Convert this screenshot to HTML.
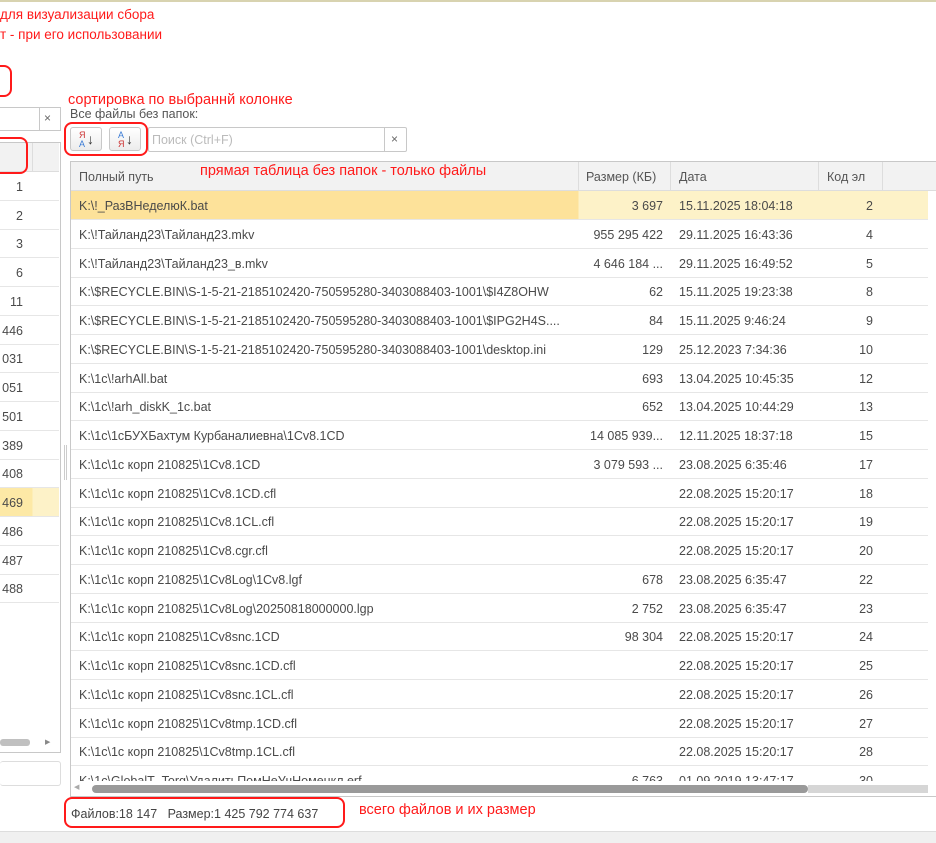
<!DOCTYPE html>
<html><head><meta charset="utf-8"><style>
*{box-sizing:border-box;margin:0;padding:0}
body{width:936px;height:843px;overflow:hidden;background:#fff;font-family:"Liberation Sans",Arial,sans-serif;font-size:12.5px;color:#4a4a4a;position:relative}
.a{position:absolute}
.red{color:#ff1a1a;font-size:14.5px;white-space:nowrap}
.rbox{position:absolute;border:2px solid #ff1a1a;border-radius:8px}
.row{position:absolute;left:71px;width:857px;height:29px;border-bottom:1px solid #e6e6e6;white-space:nowrap}
.row span{position:absolute;top:8px}
.c1{left:8px}
.c2{right:265px;text-align:right}
.c3{left:608px}
.c4{right:55px}
.lrow{position:absolute;left:0;width:59px;height:29px;border-bottom:1px solid #e6e6e6}
.lrow span{position:absolute;right:36px;top:8px}
.btn{position:absolute;width:32px;height:24px;border:1px solid #c8c8c8;border-radius:3px;background:linear-gradient(#fff,#ececec);font-size:9px;line-height:9px}
</style></head><body>
<div class="a" style="left:0;top:0;width:936px;height:2px;background:#d8d3b0"></div>
<div class="a red" style="left:0;top:7px;font-size:13.5px">для визуализации сбора</div>
<div class="a red" style="left:0;top:27px;font-size:13.5px">т - при его использовании</div>
<div class="rbox" style="left:-10px;top:65px;width:22px;height:32px"></div>

<!-- left panel -->
<div class="a" style="left:0;top:107px;width:61px;height:24px;border:1px solid #c8c8c8;border-left:none"></div>
<div class="a" style="left:39px;top:108px;width:1px;height:22px;background:#c8c8c8"></div>
<div class="a" style="left:44px;top:111px;font-size:12px;color:#666">×</div>
<div class="a" style="left:0;top:142px;width:61px;height:611px;border:1px solid #c8c8c8;border-left:none"></div>
<div class="a" style="left:0;top:143px;width:59px;height:29px;background:#f2f2f2;border-bottom:1px solid #ddd"></div>
<div class="a" style="left:32px;top:143px;width:1px;height:29px;background:#ddd"></div>
<div class="rbox" style="left:-10px;top:137px;width:38px;height:37px"></div>
<div class="lrow" style="top:172px"><span>1</span></div>
<div class="lrow" style="top:201px"><span>2</span></div>
<div class="lrow" style="top:229px"><span>3</span></div>
<div class="lrow" style="top:258px"><span>6</span></div>
<div class="lrow" style="top:287px"><span>11</span></div>
<div class="lrow" style="top:316px"><span>446</span></div>
<div class="lrow" style="top:344px"><span>031</span></div>
<div class="lrow" style="top:373px"><span>051</span></div>
<div class="lrow" style="top:402px"><span>501</span></div>
<div class="lrow" style="top:431px"><span>389</span></div>
<div class="lrow" style="top:459px"><span>408</span></div>
<div class="lrow" style="top:488px;background:linear-gradient(90deg,#fde9a6 0,#fde9a6 32px,#fdf2c8 33px)"><span>469</span></div>
<div class="lrow" style="top:517px"><span>486</span></div>
<div class="lrow" style="top:546px"><span>487</span></div>
<div class="lrow" style="top:574px"><span>488</span></div>
<div class="a" style="left:0;top:739px;width:30px;height:7px;background:#c0c0c0;border-radius:3px"></div>
<div class="a" style="left:45px;top:738px;font-size:7px;color:#888">▶</div>
<div class="a" style="left:0;top:761px;width:61px;height:25px;border:1px solid #ddd;border-left:none;border-radius:3px"></div>
<div class="a" style="left:64px;top:445px;width:3px;height:35px;border-left:1px solid #ccc;border-right:1px solid #ccc"></div>

<!-- main -->
<div class="a red" style="left:68px;top:92px">сортировка по выбраннй колонке</div>
<div class="a" style="left:70px;top:107px;font-size:12.5px;color:#555">Все файлы без папок:</div>
<div class="btn" style="left:70px;top:127px"><div style="position:absolute;left:8px;top:3px;color:#c33">Я</div><div style="position:absolute;left:8px;top:12px;color:#3a7bd5">А</div><div style="position:absolute;left:16px;top:2px;font-size:14px;line-height:18px;color:#333">↓</div></div>
<div class="btn" style="left:109px;top:127px"><div style="position:absolute;left:8px;top:3px;color:#3a7bd5">А</div><div style="position:absolute;left:8px;top:12px;color:#c33">Я</div><div style="position:absolute;left:16px;top:2px;font-size:14px;line-height:18px;color:#333">↓</div></div>
<div class="rbox" style="left:64px;top:122px;width:84px;height:34px"></div>
<div class="a" style="left:148px;top:127px;width:259px;height:25px;border:1px solid #c8c8c8;border-radius:2px"></div>
<div class="a" style="left:152px;top:133px;color:#bbb">Поиск (Ctrl+F)</div>
<div class="a" style="left:384px;top:128px;width:1px;height:23px;background:#c8c8c8"></div>
<div class="a" style="left:391px;top:132px;font-size:12px;color:#666">×</div>

<div class="a" style="left:70px;top:161px;width:866px;height:636px;border:1px solid #c8c8c8;border-right:none"></div>
<div class="a" style="left:71px;top:162px;width:865px;height:29px;background:#f2f2f2;border-bottom:1px solid #ddd"></div>
<div class="a" style="left:578px;top:162px;width:1px;height:29px;background:#ddd"></div>
<div class="a" style="left:670px;top:162px;width:1px;height:29px;background:#ddd"></div>
<div class="a" style="left:818px;top:162px;width:1px;height:29px;background:#ddd"></div>
<div class="a" style="left:882px;top:162px;width:1px;height:29px;background:#ddd"></div>
<div class="a" style="left:79px;top:170px;color:#555">Полный путь</div>
<div class="a" style="left:586px;top:170px;color:#555">Размер (КБ)</div>
<div class="a" style="left:679px;top:170px;color:#555">Дата</div>
<div class="a" style="left:827px;top:170px;color:#555">Код эл</div>
<div class="a red" style="left:200px;top:163px">прямая таблица без папок - только файлы</div>

<div class="row" style="top:191px;background:linear-gradient(90deg,#fde29a 0,#fde29a 507px,#fdf2c8 508px)"><span class="c1">K:\!_РазВНеделюК.bat</span><span class="c2">3 697</span><span class="c3">15.11.2025 18:04:18</span><span class="c4">2</span></div>
<div class="row" style="top:220px"><span class="c1">K:\!Тайланд23\Тайланд23.mkv</span><span class="c2">955 295 422</span><span class="c3">29.11.2025 16:43:36</span><span class="c4">4</span></div>
<div class="row" style="top:249px"><span class="c1">K:\!Тайланд23\Тайланд23_в.mkv</span><span class="c2">4 646 184 ...</span><span class="c3">29.11.2025 16:49:52</span><span class="c4">5</span></div>
<div class="row" style="top:277px"><span class="c1">K:\$RECYCLE.BIN\S-1-5-21-2185102420-750595280-3403088403-1001\$I4Z8OHW</span><span class="c2">62</span><span class="c3">15.11.2025 19:23:38</span><span class="c4">8</span></div>
<div class="row" style="top:306px"><span class="c1">K:\$RECYCLE.BIN\S-1-5-21-2185102420-750595280-3403088403-1001\$IPG2H4S....</span><span class="c2">84</span><span class="c3">15.11.2025 9:46:24</span><span class="c4">9</span></div>
<div class="row" style="top:335px"><span class="c1">K:\$RECYCLE.BIN\S-1-5-21-2185102420-750595280-3403088403-1001\desktop.ini</span><span class="c2">129</span><span class="c3">25.12.2023 7:34:36</span><span class="c4">10</span></div>
<div class="row" style="top:364px"><span class="c1">K:\1c\!arhAll.bat</span><span class="c2">693</span><span class="c3">13.04.2025 10:45:35</span><span class="c4">12</span></div>
<div class="row" style="top:392px"><span class="c1">K:\1c\!arh_diskK_1c.bat</span><span class="c2">652</span><span class="c3">13.04.2025 10:44:29</span><span class="c4">13</span></div>
<div class="row" style="top:421px"><span class="c1">K:\1c\1сБУХБахтум Курбаналиевна\1Cv8.1CD</span><span class="c2">14 085 939...</span><span class="c3">12.11.2025 18:37:18</span><span class="c4">15</span></div>
<div class="row" style="top:450px"><span class="c1">K:\1c\1c корп 210825\1Cv8.1CD</span><span class="c2">3 079 593 ...</span><span class="c3">23.08.2025 6:35:46</span><span class="c4">17</span></div>
<div class="row" style="top:479px"><span class="c1">K:\1c\1c корп 210825\1Cv8.1CD.cfl</span><span class="c2"></span><span class="c3">22.08.2025 15:20:17</span><span class="c4">18</span></div>
<div class="row" style="top:507px"><span class="c1">K:\1c\1c корп 210825\1Cv8.1CL.cfl</span><span class="c2"></span><span class="c3">22.08.2025 15:20:17</span><span class="c4">19</span></div>
<div class="row" style="top:536px"><span class="c1">K:\1c\1c корп 210825\1Cv8.cgr.cfl</span><span class="c2"></span><span class="c3">22.08.2025 15:20:17</span><span class="c4">20</span></div>
<div class="row" style="top:565px"><span class="c1">K:\1c\1c корп 210825\1Cv8Log\1Cv8.lgf</span><span class="c2">678</span><span class="c3">23.08.2025 6:35:47</span><span class="c4">22</span></div>
<div class="row" style="top:594px"><span class="c1">K:\1c\1c корп 210825\1Cv8Log\20250818000000.lgp</span><span class="c2">2 752</span><span class="c3">23.08.2025 6:35:47</span><span class="c4">23</span></div>
<div class="row" style="top:622px"><span class="c1">K:\1c\1c корп 210825\1Cv8snc.1CD</span><span class="c2">98 304</span><span class="c3">22.08.2025 15:20:17</span><span class="c4">24</span></div>
<div class="row" style="top:651px"><span class="c1">K:\1c\1c корп 210825\1Cv8snc.1CD.cfl</span><span class="c2"></span><span class="c3">22.08.2025 15:20:17</span><span class="c4">25</span></div>
<div class="row" style="top:680px"><span class="c1">K:\1c\1c корп 210825\1Cv8snc.1CL.cfl</span><span class="c2"></span><span class="c3">22.08.2025 15:20:17</span><span class="c4">26</span></div>
<div class="row" style="top:709px"><span class="c1">K:\1c\1c корп 210825\1Cv8tmp.1CD.cfl</span><span class="c2"></span><span class="c3">22.08.2025 15:20:17</span><span class="c4">27</span></div>
<div class="row" style="top:737px"><span class="c1">K:\1c\1c корп 210825\1Cv8tmp.1CL.cfl</span><span class="c2"></span><span class="c3">22.08.2025 15:20:17</span><span class="c4">28</span></div>
<div class="row" style="top:766px;height:15px;overflow:hidden;border:none"><span class="c1">K:\1c\GlobalT_Torg\УдалитьПомНеУчНоменкл.erf</span><span class="c2">6 763</span><span class="c3">01.09.2019 13:47:17</span><span class="c4">30</span></div>
<div class="a" style="left:71px;top:781px;width:857px;height:14px;background:#fff"></div>
<div class="a" style="left:92px;top:785px;width:716px;height:8px;background:#9a9a9a;border-radius:4px"></div>
<div class="a" style="left:808px;top:785px;width:120px;height:8px;background:#d6d6d6"></div>
<div class="a" style="left:74px;top:783px;font-size:7px;color:#aaa">◀</div>

<div class="rbox" style="left:64px;top:797px;width:281px;height:31px"></div>
<div class="a" style="left:71px;top:807px;color:#444">Файлов:18 147&nbsp;&nbsp; Размер:1 425 792 774 637</div>
<div class="a red" style="left:359px;top:802px">всего файлов и их размер</div>
<div class="a" style="left:0;top:831px;width:936px;height:12px;background:#f0f0f0;border-top:1px solid #ddd"></div>
</body></html>
